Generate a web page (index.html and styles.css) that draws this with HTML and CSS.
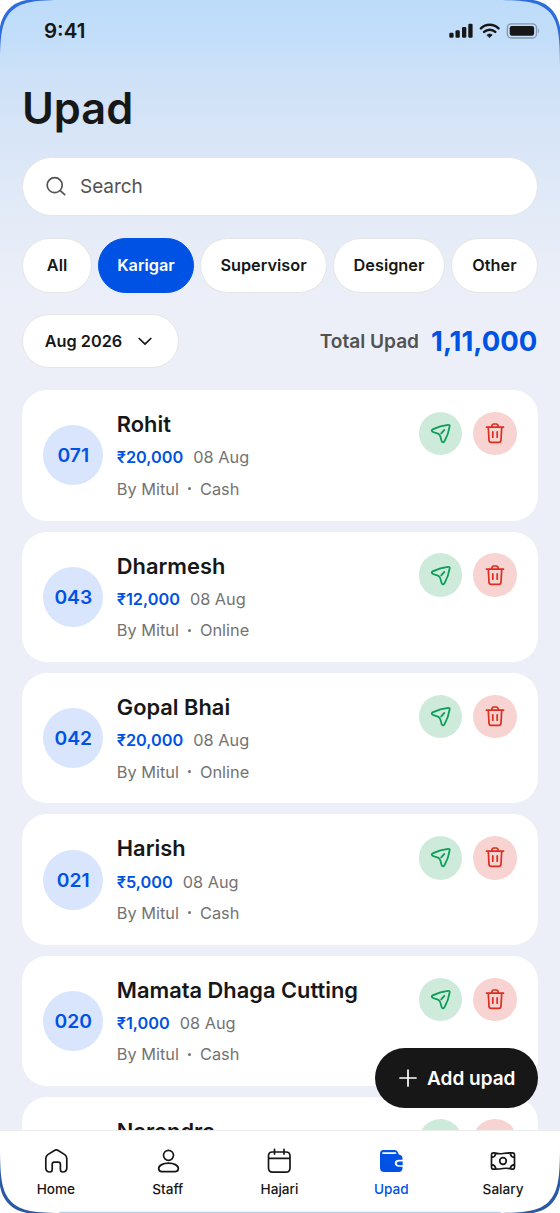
FILE: index.html
```
<!DOCTYPE html>
<html lang="en">
<head>
<meta charset="utf-8">
<title>Upad</title>
<link rel="stylesheet" href="styles.css">
</head>
<body>
<svg class="symbols" width="0" height="0">
  <symbol id="send" viewBox="0 0 20 20"><path d="M18.700 3.200Q19 1.600 17.200 1.700C12 2.200 7 3.800 3 5.800Q.8 7 2.300 8.200C4.200 9.700 7.800 9.300 9.200 11.400C10.500 13.400 10.300 15.800 11.300 17.600Q12.500 19.400 13.800 17.400C16.500 12.800 18 8 18.700 3.200ZM10.700 9.800l2.900-3.200"/></symbol>
  <symbol id="trash" viewBox="0 0 20 22"><path d="M1.500 5.200h17M6.600 5.200c.2-2.300.8-3.200 2.100-3.200h2.600c1.300 0 1.900.9 2.100 3.200M3.300 5.200l.7 13c.1 1.600.7 2.100 2.200 2.100h7.600c1.500 0 2.100-.5 2.200-2.100l.7-13M7.800 9.800v5.400M12.200 9.800v5.400"/></symbol>
</svg>
<div class="screen">
  <header class="status">
    <span class="time">9:41</span>
    <svg class="status-icons" width="92" height="18" viewBox="0 0 92 18">
      <g fill="#171717">
        <rect x=".3" y="10.800" width="4.300" height="5" rx="1.200"/><rect x="6.500" y="8.300" width="4.300" height="7.500" rx="1.200"/><rect x="13" y="5" width="4.300" height="10.800" rx="1.200"/><rect x="19.300" y="1.800" width="4.300" height="14" rx="1.200"/>
        <path d="M38.200 12.900c1.200-1.100 3.800-1.100 5 0l-2.500 2.500Z" stroke="#171717" stroke-width=".8" stroke-linejoin="round"/>
        <rect x="60.700" y="4" width="24.400" height="9.800" rx="2.200"/>
      </g>
      <g fill="none" stroke="#171717" stroke-width="2.500"><path d="M31.900 6.300c5-4.900 12.600-4.900 17.600 0M35.100 9.900c3.200-3 8-3 11.200 0"/></g>
      <rect x="58.300" y="1.800" width="29.200" height="14.200" rx="4" fill="none" stroke="#171717" stroke-opacity=".35" stroke-width="1.300"/>
      <path d="M89 6.600q2.300 2.300 0 4.600Z" fill="#171717" opacity=".35"/>
    </svg>
  </header>
  <h1 class="title">Upad</h1>
  <div class="search">
    <svg width="20" height="20" viewBox="0 0 20 20"><path d="M16.200 9.200a7.500 7.500 0 1 1-15 0a7.500 7.500 0 0 1 15 0ZM14.500 14.800l4.200 3.900"/></svg>
    <span>Search</span>
  </div>
  <div class="chips">
    <span class="chip all">All</span><span class="chip karigar">Karigar</span><span class="chip supervisor">Supervisor</span><span class="chip designer">Designer</span><span class="chip other">Other</span>
  </div>
  <div class="summary">
    <div class="month"><span>Aug 2026</span><svg width="14" height="9" viewBox="0 0 14 9"><path d="M1.200 1.500L7 7.200L12.800 1.500"/></svg></div>
    <div class="total"><span class="total-label">Total Upad</span><strong>1,11,000</strong></div>
  </div>
  <main class="list">
    <article class="card"><div class="avatar">071</div><div class="info"><h2>Rohit</h2><p class="amount"><b>₹20,000</b><span>08 Aug</span></p><p class="by"><span>By Mitul</span><i></i><span>Cash</span></p></div><div class="actions"><span class="act send"><svg><use href="#send"/></svg></span><span class="act trash"><svg><use href="#trash"/></svg></span></div></article>
    <article class="card"><div class="avatar">043</div><div class="info"><h2>Dharmesh</h2><p class="amount"><b>₹12,000</b><span>08 Aug</span></p><p class="by"><span>By Mitul</span><i></i><span>Online</span></p></div><div class="actions"><span class="act send"><svg><use href="#send"/></svg></span><span class="act trash"><svg><use href="#trash"/></svg></span></div></article>
    <article class="card"><div class="avatar">042</div><div class="info"><h2>Gopal Bhai</h2><p class="amount"><b>₹20,000</b><span>08 Aug</span></p><p class="by"><span>By Mitul</span><i></i><span>Online</span></p></div><div class="actions"><span class="act send"><svg><use href="#send"/></svg></span><span class="act trash"><svg><use href="#trash"/></svg></span></div></article>
    <article class="card"><div class="avatar">021</div><div class="info"><h2>Harish</h2><p class="amount"><b>₹5,000</b><span>08 Aug</span></p><p class="by"><span>By Mitul</span><i></i><span>Cash</span></p></div><div class="actions"><span class="act send"><svg><use href="#send"/></svg></span><span class="act trash"><svg><use href="#trash"/></svg></span></div></article>
    <article class="card"><div class="avatar">020</div><div class="info"><h2>Mamata Dhaga Cutting</h2><p class="amount"><b>₹1,000</b><span>08 Aug</span></p><p class="by"><span>By Mitul</span><i></i><span>Cash</span></p></div><div class="actions"><span class="act send"><svg><use href="#send"/></svg></span><span class="act trash"><svg><use href="#trash"/></svg></span></div></article>
    <article class="card"><div class="info last"><h2>Narendra</h2></div><div class="actions"><span class="act send"></span><span class="act trash"></span></div></article>
  </main>
  <nav class="nav">
    <div class="tab"><svg viewBox="0 0 26 26"><path d="M2.800 10.500c0-1.800.5-2.700 2-3.900L11 2.700c1.600-1.100 3-1.100 4.600 0l6.200 3.900c1.500 1.200 2 2.100 2 3.900v9.200c0 3-1.200 4.300-4 4.300-1.700 0-2.400-.8-2.400-2.400v-5.200c0-1.600-.6-2.200-2.200-2.200h-3.800c-1.600 0-2.200.6-2.200 2.200v5.200c0 1.600-.8 2.400-2.400 2.400-2.800 0-4-1.300-4-4.300Z"/></svg><span>Home</span></div>
    <div class="tab"><svg viewBox="0 0 26 26"><circle cx="13.500" cy="7.300" r="5"/><path d="M3.700 20.600c0-3.400 4.600-5.400 9.800-5.400s9.800 2 9.800 5.400c0 2-1.200 3-3 3H6.700c-1.800 0-3-1-3-3Z"/></svg><span>Staff</span></div>
    <div class="tab"><svg viewBox="0 0 26 26"><path d="M6.300 4H20Q24 4 24 8v12Q24 24.200 19.800 24.200H6.700Q2.500 24.200 2.500 20V8Q2.500 4 6.300 4ZM2.500 10.400h21.500M8.500 1.300v4.800M18 1.300v4.800"/></svg><span>Hajari</span></div>
    <div class="tab active"><svg viewBox="0 0 26 26"><path class="solid" d="M5.500 2h11q2.500 0 3.400 2.200l.9 2.300q3.700.4 3.700 4v1.300H21c-2.800 0-4.200 1.200-4.200 3.500s1.400 3.500 4.200 3.500h3.500v1.200q0 4-4 4h-14q-4.500 0-4.500-4.500V5.700Q2 2 5.500 2Z"/><path class="slot" d="M5 5.100h12.500"/><path class="solid" d="M21 13.500h3.700v3.700H21q-2.100 0-2.100-1.850T21 13.500Z"/></svg><span>Upad</span></div>
    <div class="tab"><svg viewBox="0 0 26 26"><path d="M1.500 7Q1.500 4.600 4 4.900Q9 6.200 13 5.500T22 4.900Q24.500 4.600 24.500 7V19Q24.500 21.400 22 21.100Q17 19.800 13 20.500T4 21.100Q1.500 21.400 1.500 19ZM1.800 9.300Q5.300 8.800 5.800 5.300M20.200 5.300Q20.700 8.800 24.200 9.300M1.800 16.700Q5.300 17.200 5.800 20.700M20.200 20.700Q20.700 17.200 24.200 16.700"/><circle cx="13" cy="13" r="3.300"/></svg><span>Salary</span></div>
  </nav>
  <div class="fab"><svg width="18" height="18" viewBox="0 0 18 18"><path d="M9 1v16M1 9h16"/></svg><span>Add upad</span></div>
  <svg class="frame" width="560" height="1213" viewBox="0 0 560 1213">
    <defs>
      <g id="corner"><path d="M0 0H66C34 0 21 2 11.300 11.300C2 21 0 34 0 66Z"/><path fill="#fff" d="M0 0H27C19 1.500 13.500 4 8.900 8.900S1.500 19 0 27Z"/></g>
    </defs>
    <use href="#corner" fill="#2e6cdc"/>
    <use href="#corner" fill="#2e6cdc" transform="translate(560 0) scale(-1 1)"/>
    <use href="#corner" fill="#2b59a6" transform="translate(0 1213) scale(1 -1)"/>
    <use href="#corner" fill="#2b59a6" transform="translate(560 1213) scale(-1 -1)"/>
    <path d="M60 1212.500H500" stroke="#b6cdea"/>
  </svg>
</div>
</body>
</html>
```
FILE: styles.css
```
* { box-sizing: border-box; }
body { margin: 0; font-family: Inter, "Liberation Sans", sans-serif; color: #171717; }
h1, h2, p { margin: 0; font-weight: 600; }
svg { fill: none; stroke: currentColor; stroke-width: 1.7; stroke-linecap: round; stroke-linejoin: round; flex: none; }
.symbols { position: absolute; }
.screen { position: relative; width: 560px; height: 1213px; overflow: hidden; display: flex; flex-direction: column; background: linear-gradient(#bddcfa 0, #c3def9 42px, #cee1f8 75px, #d7e5f7 130px, #e4ebf7 220px, #eceff8 300px); }
.status { height: 62px; padding: 0 19px 0 44px; display: flex; align-items: center; justify-content: space-between; flex: none; }
.time { font-size: 20.500px; line-height: 24px; margin-top: -1px; font-weight: 600; }
.status-icons { stroke: none; }
.title { font-size: 43.300px; line-height: 52px; height: 52px; margin: 20px 0 22.500px 22px; flex: none; }
.search { height: 59px; margin: 0 22px; padding-left: 23px; display: flex; align-items: center; gap: 14px; background: #fff; border: 1.400px solid #e5e5e5; border-radius: 30px; font-size: 19px; letter-spacing: -.05px; color: #525252; flex: none; }
.chips { display: flex; gap: 5.750px; margin: 22px 22px 0; height: 55px; flex: none; }
.chip { height: 55px; display: flex; align-items: center; justify-content: center; border: 1.400px solid #e5e5e5; border-radius: 28px; background: #fff; font-size: 16.300px; font-weight: 600; }
.all { width: 70px; }
.karigar { width: 96.500px; background: #0052e4; border-color: #0052e4; color: #fff; }
.supervisor { width: 127px; }
.designer { width: 112.500px; }
.other { width: 87px; }
.summary { display: flex; justify-content: space-between; align-items: center; margin: 21.500px 22px 22.300px; height: 54px; flex: none; }
.month { width: 157px; height: 54px; padding-left: 21.700px; display: flex; align-items: center; gap: 16px; background: #fff; border: 1.400px solid #e5e5e5; border-radius: 27px; font-size: 16.300px; font-weight: 600; }
.total { display: flex; align-items: center; gap: 12px; padding-right: .7px; font-size: 19.100px; font-weight: 600; color: #525252; }
.total strong { font-size: 27.500px; font-weight: 700; color: #0052e4; }
.list { flex: 1; min-height: 0; overflow: hidden; padding: 0 22px; display: flex; flex-direction: column; gap: 11px; }
.card { height: 130.400px; flex: none; display: flex; padding: 21.700px 21.500px 21.700px 21.300px; background: #fff; border-radius: 25px; }
.avatar { width: 60px; height: 60px; margin: 13.500px 13.500px 0 0; border-radius: 50%; background: #d9e5fc; color: #0052e4; font-size: 19.300px; font-weight: 600; display: flex; align-items: center; justify-content: center; flex: none; }
.info { flex: 1; }
.info.last { margin-left: 73.500px; }
.info h2 { font-size: 21.850px; line-height: 26px; margin-top: -.8px; }
.amount { display: flex; gap: 10px; font-size: 16.300px; line-height: 22px; margin-top: 9.300px; color: #737373; font-weight: 400; }
.amount b { color: #0052e4; font-weight: 600; }
.by { display: flex; align-items: center; font-size: 16.350px; line-height: 22px; margin-top: 9.300px; color: #737373; font-weight: 400; }
.by i { width: 3px; height: 3px; margin: 0 9px; border-radius: 50%; background: #737373; }
.actions { display: flex; gap: 11px; }
.act { width: 43.500px; height: 43.500px; border-radius: 50%; display: flex; align-items: center; justify-content: center; }
.act.send { background: #cdeadb; color: #0b9c58; }
.act.trash { background: #f7d4d1; color: #dc2d20; }
.send svg { width: 21px; height: 21px; }
.trash svg { width: 20px; height: 22px; margin-top: -1px; }
.nav { height: 83px; flex: none; display: flex; padding-right: 1px; background: #fff; border-top: 1px solid #ececec; }
.tab { flex: 1; display: flex; flex-direction: column; align-items: center; padding-top: 17px; font-size: 13.600px; font-weight: 500; line-height: 18px; gap: 6px; }
.tab svg { width: 26px; height: 26px; }
.tab.active { color: #0052e4; }
.solid { fill: currentColor; stroke: none; }
.slot { stroke: #fff; stroke-width: 1.700px; }
.fab { position: absolute; left: 375px; top: 1048px; width: 163px; height: 60px; border-radius: 30px; background: #171717; color: #fff; display: flex; align-items: center; padding-left: 24px; gap: 10px; font-size: 19px; font-weight: 600; }
.frame { position: absolute; left: 0; top: 0; stroke: none; pointer-events: none; }
```
